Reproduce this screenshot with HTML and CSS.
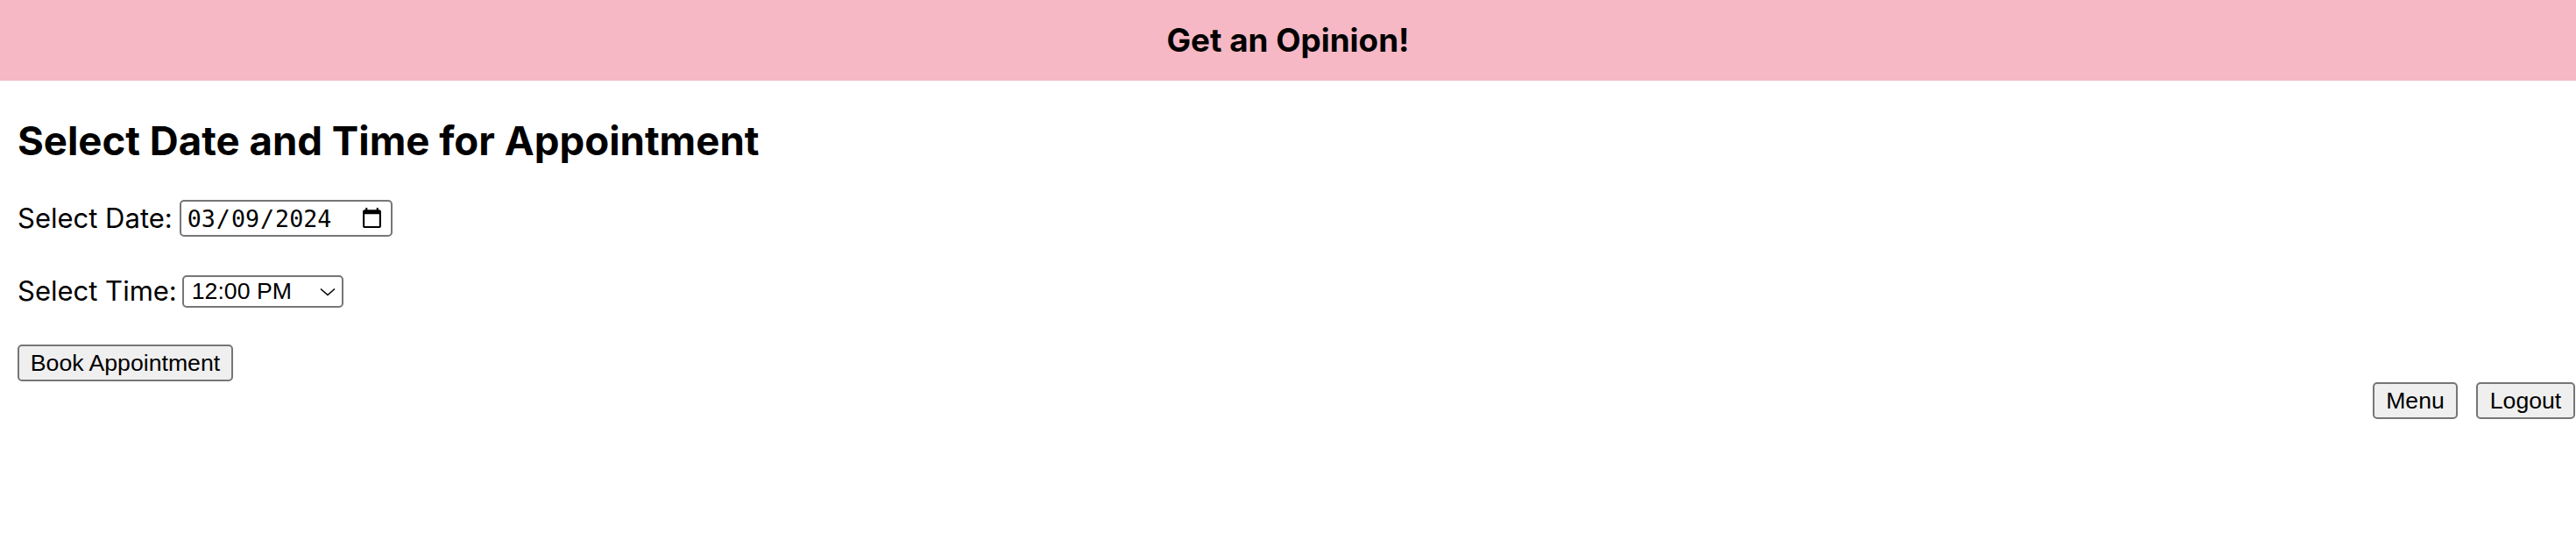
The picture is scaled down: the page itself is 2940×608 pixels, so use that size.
FILE: index.html
```html
<!DOCTYPE html>
<html lang="en">
<head>
<meta charset="utf-8">
<title>Get an Opinion!</title>
<link rel="stylesheet" href="styles.css">
</head>
<body>
<header class="topbar">
  <h1 class="brand">Get an Opinion!</h1>
</header>
<main class="content">
  <h2 class="title">Select Date and Time for Appointment</h2>
  <div class="row row-date">
    <label class="label" for="date">Select Date:</label>
    <input class="date-input" type="date" id="date" value="2024-03-09">
  </div>
  <div class="row row-time">
    <label class="label" for="time">Select Time:</label>
    <div class="select-wrap">
      <select class="time-select" id="time">
        <option>12:00 PM</option>
        <option>1:00 PM</option>
        <option>2:00 PM</option>
      </select>
      <svg class="chevron" width="18" height="10" viewBox="0 0 18 10" aria-hidden="true">
        <polyline points="1,1.5 9,8.5 17,1.5" fill="none" stroke="#000" stroke-width="1.6"/>
      </svg>
    </div>
  </div>
  <div class="row row-book">
    <button class="btn btn-book" type="button">Book Appointment</button>
  </div>
</main>
<nav class="nav">
  <button class="btn btn-menu" type="button">Menu</button>
  <button class="btn btn-logout" type="button">Logout</button>
</nav>
</body>
</html>
```

FILE: styles.css
```css
html, body {
  margin: 0;
  padding: 0;
  background: #ffffff;
}

body {
  font-family: Inter, "Liberation Sans", Arial, sans-serif;
  color: #000000;
}

.topbar {
  height: 92px;
  background: #f5b8c4;
  display: flex;
  align-items: center;
  justify-content: center;
}

.brand {
  margin: 0;
  font-family: Inter, sans-serif;
  font-weight: 700;
  font-size: 36.8px;
  line-height: 46px;
}

.content {
  padding: 0 20px;
}

.title {
  margin: 42px 0 0 0;
  font-family: Inter, sans-serif;
  font-weight: 700;
  font-size: 45.6px;
  line-height: 54px;
}

.row {
  display: flex;
  align-items: center;
}

.row-date {
  margin-top: 40px;
  gap: 8px;
}

.row-time {
  margin-top: 42px;
  gap: 6px;
}

.row-book {
  margin-top: 41px;
}

.label {
  font-family: Inter, sans-serif;
  font-size: 31px;
  line-height: 40px;
}

.date-input {
  box-sizing: border-box;
  width: 243px;
  height: 42px;
  margin: 0;
  padding: 2px 6px;
  font-family: "DejaVu Sans Mono", monospace;
  font-size: 26.67px;
  border: 2px solid #767676;
  border-radius: 5px;
  background: #ffffff;
  color: #000000;
}

.select-wrap {
  position: relative;
  display: flex;
}

.time-select {
  box-sizing: border-box;
  width: 184px;
  height: 37px;
  margin: 0;
  padding: 0 0 0 9px;
  -webkit-appearance: none;
  appearance: none;
  font-family: "Liberation Sans", Arial, sans-serif;
  font-size: 26.67px;
  border: 2px solid #767676;
  border-radius: 5px;
  background: #ffffff;
  color: #000000;
}

.chevron {
  position: absolute;
  right: 9px;
  top: 14px;
  pointer-events: none;
}

.btn {
  box-sizing: border-box;
  height: 42px;
  margin: 0;
  padding: 0;
  font-family: "Liberation Sans", Arial, sans-serif;
  font-size: 26.67px;
  line-height: 30px;
  text-align: center;
  color: #000000;
  background: #efefef;
  border: 2px solid #767676;
  border-radius: 5px;
}

.btn-book {
  width: 246px;
}

.nav {
  display: flex;
  justify-content: flex-end;
  gap: 21px;
  margin-top: 1px;
  padding-right: 1px;
}

.btn-menu {
  width: 97px;
}

.btn-logout {
  width: 113px;
}
```
